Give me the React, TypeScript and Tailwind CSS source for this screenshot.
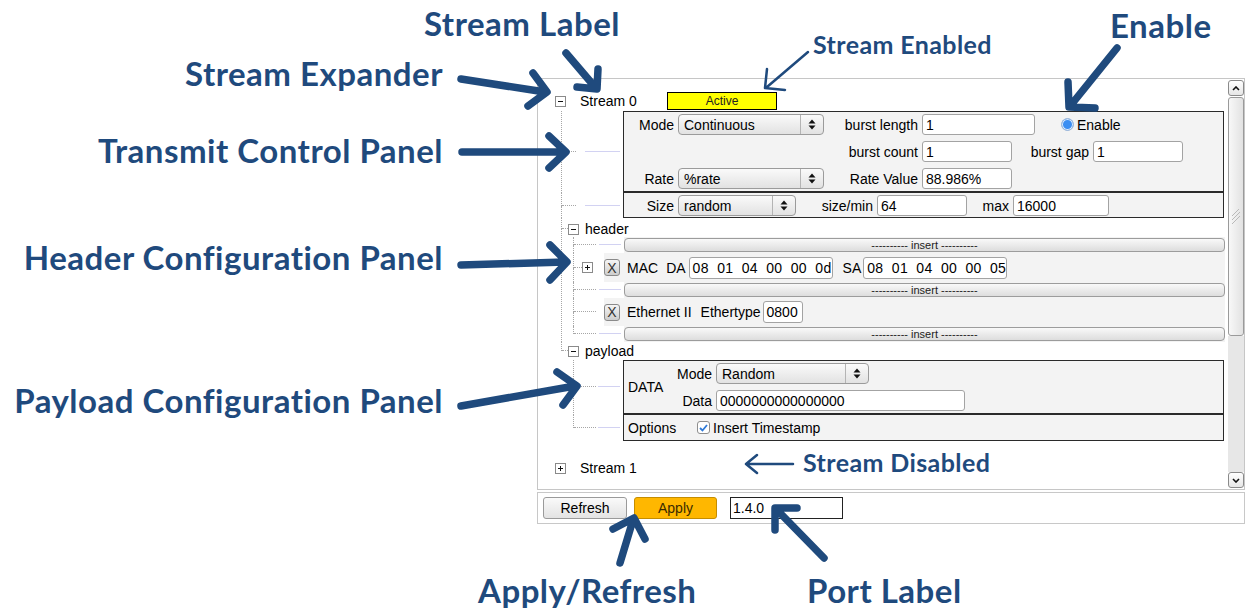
import React from 'react';

const ui = "font-['Liberation_Sans',Arial,sans-serif]";
const ann = "absolute font-['Lato',sans-serif] font-bold text-[#1f4a7d] leading-none whitespace-nowrap";
const big = 'text-[33px] tracking-[0.5px]';
const small = 'text-[25px] tracking-[0.4px]';

const Box = ({ plus }: { plus?: boolean }) => (
  <svg width="11" height="11" viewBox="0 0 11 11" className="shrink-0">
    <rect x="0.5" y="0.5" width="10" height="10" fill="white" stroke="#8a8a8a" />
    <path d="M3 5.5h5" stroke="#111" />
    {plus && <path d="M5.5 3v5" stroke="#111" />}
  </svg>
);

type ConnProps = { w: string; top: string; dot: string; lav?: string; last?: boolean };

// tree connector: vertical dotted line on the left, horizontal line at the row centre
const Conn = ({ w, top, dot, lav, last }: ConnProps) => (
  <div className={`flex shrink-0 flex-col ${w}`}>
    <div className={`flex items-end border-l border-dotted border-[#a6a6a6] ${top}`}>
      <div className={`border-b border-dotted border-[#a6a6a6] ${dot}`} />
      {lav && <div className={`ml-auto mr-[3px] border-b border-[#d2d2f2] ${lav}`} />}
    </div>
    <div className={`flex-1 ${last ? '' : 'border-l border-dotted border-[#a6a6a6]'}`} />
  </div>
);

const Lbl = ({ w, children }: { w: string; children: React.ReactNode }) => (
  <span className={`${w} shrink-0 pr-[4px] text-right text-[14px] leading-none`}>{children}</span>
);

const Select = ({ w, value }: { w: string; value: string }) => (
  <div className={`flex h-[21px] ${w} shrink-0 items-center rounded-[4px] border border-[#9b9b9b] bg-linear-to-b from-[#fafafa] to-[#e2e2e2]`}>
    <span className="flex-1 pl-[5px] text-[14px] leading-none">{value}</span>
    <span className="flex h-full w-[23px] items-center justify-center border-l border-[#b4b4b4]">
      <svg width="8" height="11" viewBox="0 0 8 11">
        <path d="M0.5 4.5 4 0.5 7.5 4.5Z M0.5 6.5 4 10.5 7.5 6.5Z" fill="#111" />
      </svg>
    </span>
  </div>
);

const Input = ({ w, value, h = 'h-[21px]', cls = '' }: { w: string; value: string; h?: string; cls?: string }) => (
  <div className={`flex ${h} ${w} shrink-0 items-center rounded-[3px] border border-[#a3a3a3] bg-white pl-[3px] text-[14px] leading-none whitespace-pre ${cls}`}>
    {value}
  </div>
);

const Insert = () => (
  <div className="flex h-[14px] w-full items-center justify-center rounded-[4px] border border-[#9c9c9c] bg-linear-to-b from-[#f9f9f9] to-[#dddddd] text-[11px] leading-none text-[#222]">
    ---------- insert ----------
  </div>
);

const XBtn = () => (
  <span className="flex h-[17px] w-[16px] shrink-0 items-center justify-center rounded-[3px] border border-[#8a8a8a] bg-linear-to-b from-[#f5f5f5] to-[#cdcdcd] text-[14px] leading-none text-[#333]">
    X
  </span>
);

const InsertRow = ({ last }: { last?: boolean }) => (
  <div className="flex h-[16px]">
    <Conn w="w-[51px]" top="h-[8px]" dot="w-[22px]" lav="w-[22px]" last={last} />
    <div className="mr-[2px] flex flex-1 items-center bg-[#f3f3f3]">
      <Insert />
    </div>
  </div>
);

export default function App() {
  return (
    <div className={`relative h-[610px] w-[1245px] overflow-hidden bg-white text-black ${ui}`}>
      <div className="ml-[537px] w-[708px] pt-[78px]">
        {/* scroll area */}
        <div className="flex h-[412px] border border-[#c6c6c6] bg-white">
          <div className="flex flex-1 flex-col pl-[17px] pt-[13px]">
            {/* Stream 0 */}
            <div className="flex h-[18px] items-center">
              <Box />
              <span className="ml-[14px] w-[87px] text-[14px] leading-none">Stream 0</span>
              <span className="flex h-[18px] w-[110px] items-center justify-center border border-black bg-[#ffff00] text-[12px] leading-none text-[#222]">
                Active
              </span>
            </div>

            <div className="ml-[6px] mt-[1px] flex flex-col">
              {/* transmit control */}
              <div className="flex">
                <Conn w="w-[62px]" top="h-[41px]" dot="w-[14px]" lav="w-[35px]" />
                <div className="flex h-[82px] w-[601px] flex-col gap-[6px] border-x border-t border-b-2 border-[#2a2a2a] bg-[#f3f3f3] pt-[2px]">
                  <div className="flex h-[21px] items-center">
                    <Lbl w="w-[54px]">Mode</Lbl>
                    <Select w="w-[146px]" value="Continuous" />
                    <Lbl w="w-[98px]">burst length</Lbl>
                    <Input w="w-[113px]" value="1" />
                    <span className="ml-[26px] h-[13px] w-[13px] rounded-full border border-[#9fb8d8] bg-[#3b8ef2] shadow-[inset_0_0_0_1px_#dbe9fb]" />
                    <span className="ml-[3px] text-[14px] leading-none">Enable</span>
                  </div>
                  <div className="flex h-[21px] items-center">
                    <span className="w-[200px] shrink-0" />
                    <Lbl w="w-[98px]">burst count</Lbl>
                    <Input w="w-[90px]" value="1" />
                    <Lbl w="w-[81px]">burst gap</Lbl>
                    <Input w="w-[90px]" value="1" />
                  </div>
                  <div className="flex h-[21px] items-center">
                    <Lbl w="w-[54px]">Rate</Lbl>
                    <Select w="w-[146px]" value="%rate" />
                    <Lbl w="w-[98px]">Rate Value</Lbl>
                    <Input w="w-[90px]" value="88.986%" />
                  </div>
                </div>
              </div>
              <div className="flex">
                <Conn w="w-[62px]" top="h-[13px]" dot="w-[14px]" lav="w-[35px]" />
                <div className="flex h-[25px] w-[601px] border-x border-b border-[#2a2a2a] bg-[#f3f3f3] pt-[2px]">
                  <div className="flex h-[21px] items-center">
                    <Lbl w="w-[54px]">Size</Lbl>
                    <Select w="w-[118px]" value="random" />
                    <Lbl w="w-[81px]">size/min</Lbl>
                    <Input w="w-[90px]" value="64" />
                    <Lbl w="w-[46px]">max</Lbl>
                    <Input w="w-[96px]" value="16000" />
                  </div>
                </div>
              </div>

              {/* header */}
              <div className="flex">
                <Conn w="w-[7px]" top="h-[11px]" dot="w-[7px]" />
                <div className="flex flex-1 flex-col">
                  <div className="mt-[3px] flex h-[16px] items-center">
                    <Box />
                    <span className="ml-[6px] text-[14px] leading-none">header</span>
                  </div>
                  <div className="ml-[5px] flex flex-col">
                    <InsertRow />
                    <div className="flex h-[29px]">
                      <Conn w="w-[9px]" top="h-[15px]" dot="w-[9px]" />
                      <div className="flex items-center">
                        <Box plus />
                      </div>
                      <div className="ml-[11px] mr-[2px] flex flex-1 items-center bg-[#f3f3f3]">
                        <XBtn />
                        <span className="ml-[7px] text-[14px] leading-none">MAC</span>
                        <span className="ml-[8px] text-[14px] leading-none">DA</span>
                        <Input w="w-[144px]" h="h-[22px]" value="08  01  04  00  00  0d" cls="ml-[3px] tracking-[0.3px]" />
                        <span className="ml-[10px] text-[14px] leading-none">SA</span>
                        <Input w="w-[144px]" h="h-[22px]" value="08  01  04  00  00  05" cls="ml-[2px] tracking-[0.3px]" />
                      </div>
                    </div>
                    <InsertRow />
                    <div className="flex h-[28px]">
                      <Conn w="w-[31px]" top="h-[14px]" dot="w-[22px]" />
                      <div className="mr-[2px] flex flex-1 items-center bg-[#f3f3f3]">
                        <XBtn />
                        <span className="ml-[7px] text-[14px] leading-none">Ethernet II</span>
                        <span className="ml-[9px] text-[14px] leading-none">Ethertype</span>
                        <Input w="w-[40px]" h="h-[22px]" value="0800" cls="ml-[2px]" />
                      </div>
                    </div>
                    <InsertRow last />
                  </div>
                </div>
              </div>

              {/* payload */}
              <div className="flex">
                <Conn w="w-[7px]" top="h-[9px]" dot="w-[7px]" last />
                <div className="flex flex-1 flex-col">
                  <div className="flex h-[18px] items-center">
                    <Box />
                    <span className="ml-[6px] text-[14px] leading-none">payload</span>
                  </div>
                  <div className="ml-[5px] flex flex-col">
                    <div className="flex">
                      <Conn w="w-[50px]" top="h-[27px]" dot="w-[22px]" lav="w-[22px]" />
                      <div className="flex h-[55px] w-[601px] border-x border-t border-b-2 border-[#2a2a2a] bg-[#f3f3f3] pl-[4px]">
                        <span className="flex w-[44px] shrink-0 items-center text-[14px] leading-none">DATA</span>
                        <div className="flex flex-col gap-[6px] pt-[2px]">
                          <div className="flex h-[21px] items-center">
                            <Lbl w="w-[44px]">Mode</Lbl>
                            <Select w="w-[153px]" value="Random" />
                          </div>
                          <div className="flex h-[21px] items-center">
                            <Lbl w="w-[44px]">Data</Lbl>
                            <Input w="w-[249px]" value="0000000000000000" />
                          </div>
                        </div>
                      </div>
                    </div>
                    <div className="flex">
                      <Conn w="w-[50px]" top="h-[13px]" dot="w-[22px]" lav="w-[22px]" last />
                      <div className="flex h-[26px] w-[601px] items-center border-x border-b border-[#2a2a2a] bg-[#f3f3f3] pl-[4px]">
                        <span className="w-[69px] shrink-0 text-[14px] leading-none">Options</span>
                        <span className="flex h-[13px] w-[13px] items-center justify-center rounded-[3px] border border-[#8e8e8e] bg-white">
                          <svg width="9" height="8" viewBox="0 0 9 8">
                            <path d="M1 4 3.5 6.5 8 1" fill="none" stroke="#2f7ad8" strokeWidth="1.8" />
                          </svg>
                        </span>
                        <span className="ml-[3px] text-[14px] leading-none">Insert Timestamp</span>
                      </div>
                    </div>
                  </div>
                </div>
              </div>
            </div>

            {/* Stream 1 */}
            <div className="mt-[18px] flex h-[18px] items-center">
              <Box plus />
              <span className="ml-[14px] text-[14px] leading-none">Stream 1</span>
            </div>
          </div>

          {/* scrollbar */}
          <div className="flex w-[17px] shrink-0 flex-col pl-[1px] pt-[1px] pb-[1px]">
            <div className="flex h-[16px] items-center justify-center rounded-[3px] border border-[#8a8a8a] bg-linear-to-b from-white to-[#e6e6e6]">
              <svg width="8" height="5" viewBox="0 0 8 5"><path d="M1 4 4 1 7 4" fill="none" stroke="#111" strokeWidth="1.6" /></svg>
            </div>
            <div className="mt-[1px] flex h-[239px] items-center justify-center rounded-[3px] border border-[#9a9a9a] bg-linear-to-r from-[#f8f8f8] to-[#e2e2e2]">
              <svg width="10" height="16" viewBox="0 0 10 16" stroke="#b9b9b9" strokeWidth="1">
                <path d="M1 7 8 0M1 11 9 3M1 15 9 7" />
              </svg>
            </div>
            <div className="flex-1 bg-[#e7e7e7]" />
            <div className="flex h-[16px] items-center justify-center rounded-[3px] border border-[#8a8a8a] bg-linear-to-b from-white to-[#e6e6e6]">
              <svg width="8" height="5" viewBox="0 0 8 5"><path d="M1 1 4 4 7 1" fill="none" stroke="#111" strokeWidth="1.6" /></svg>
            </div>
          </div>
        </div>

        {/* bottom bar */}
        <div className="mt-[2px] flex h-[32px] items-center border border-[#c8c8c8] bg-white pl-[5px]">
          <div className="flex h-[22px] w-[84px] items-center justify-center rounded-[3px] border border-[#9a9a9a] bg-linear-to-b from-[#fafafa] to-[#e3e3e3] text-[14px] leading-none">
            Refresh
          </div>
          <div className="ml-[7px] flex h-[22px] w-[83px] items-center justify-center rounded-[3px] border border-[#c58d00] bg-[#ffb700] text-[14px] leading-none text-[#3a2a00]">
            Apply
          </div>
          <div className="ml-[13px] flex h-[22px] w-[113px] items-center border border-[#222] bg-white pl-[2px] text-[14px] leading-none">
            1.4.0
          </div>
        </div>
      </div>

      {/* annotations */}
      <div className={`${ann} ${big} left-[424px] top-[7px]`}>Stream Label</div>
      <div className={`${ann} ${big} right-[802px] top-[57px]`}>Stream Expander</div>
      <div className={`${ann} ${big} right-[802px] top-[134px]`}>Transmit Control Panel</div>
      <div className={`${ann} ${big} right-[802px] top-[241px]`}>Header Configuration Panel</div>
      <div className={`${ann} ${big} right-[802px] top-[384px]`}>Payload Configuration Panel</div>
      <div className={`${ann} ${small} left-[813px] top-[32px]`}>Stream Enabled</div>
      <div className={`${ann} ${big} left-[1110px] top-[9px]`}>Enable</div>
      <div className={`${ann} ${small} left-[803px] top-[450px]`}>Stream Disabled</div>
      <div className={`${ann} ${big} left-[478px] top-[574px]`}>Apply/Refresh</div>
      <div className={`${ann} ${big} left-[807px] top-[574px]`}>Port Label</div>

      <svg className="pointer-events-none absolute left-0 top-0" width="1245" height="610" viewBox="0 0 1245 610" fill="none" stroke="#1f4a7d" strokeLinecap="round" strokeLinejoin="round">
        <g strokeWidth="7.5">
          <path d="M566 53L595 87M577 87L597 89L598 69" />
          <path d="M461 79L545 92M533 73L547 92L528 106" />
          <path d="M462 152L564 152M549 136L566 152L549 168" />
          <path d="M461 265L565 262M550 245L567 262L550 280" />
          <path d="M461 406L575 386M557 372L577 386L563 405" />
          <path d="M1117 48L1071 105M1095 108L1069 107L1068 82" />
          <path d="M620 563L633 520M613 529L634 518L645 539" />
          <path d="M824 558L777 510M775 530L775 508L797 508" />
        </g>
        <g strokeWidth="2.5">
          <path d="M808 52L767 87M785 90L765 88L767 69" />
          <path d="M793 464L747 464M757 455L746 464L757 473" />
        </g>
      </svg>
    </div>
  );
}
